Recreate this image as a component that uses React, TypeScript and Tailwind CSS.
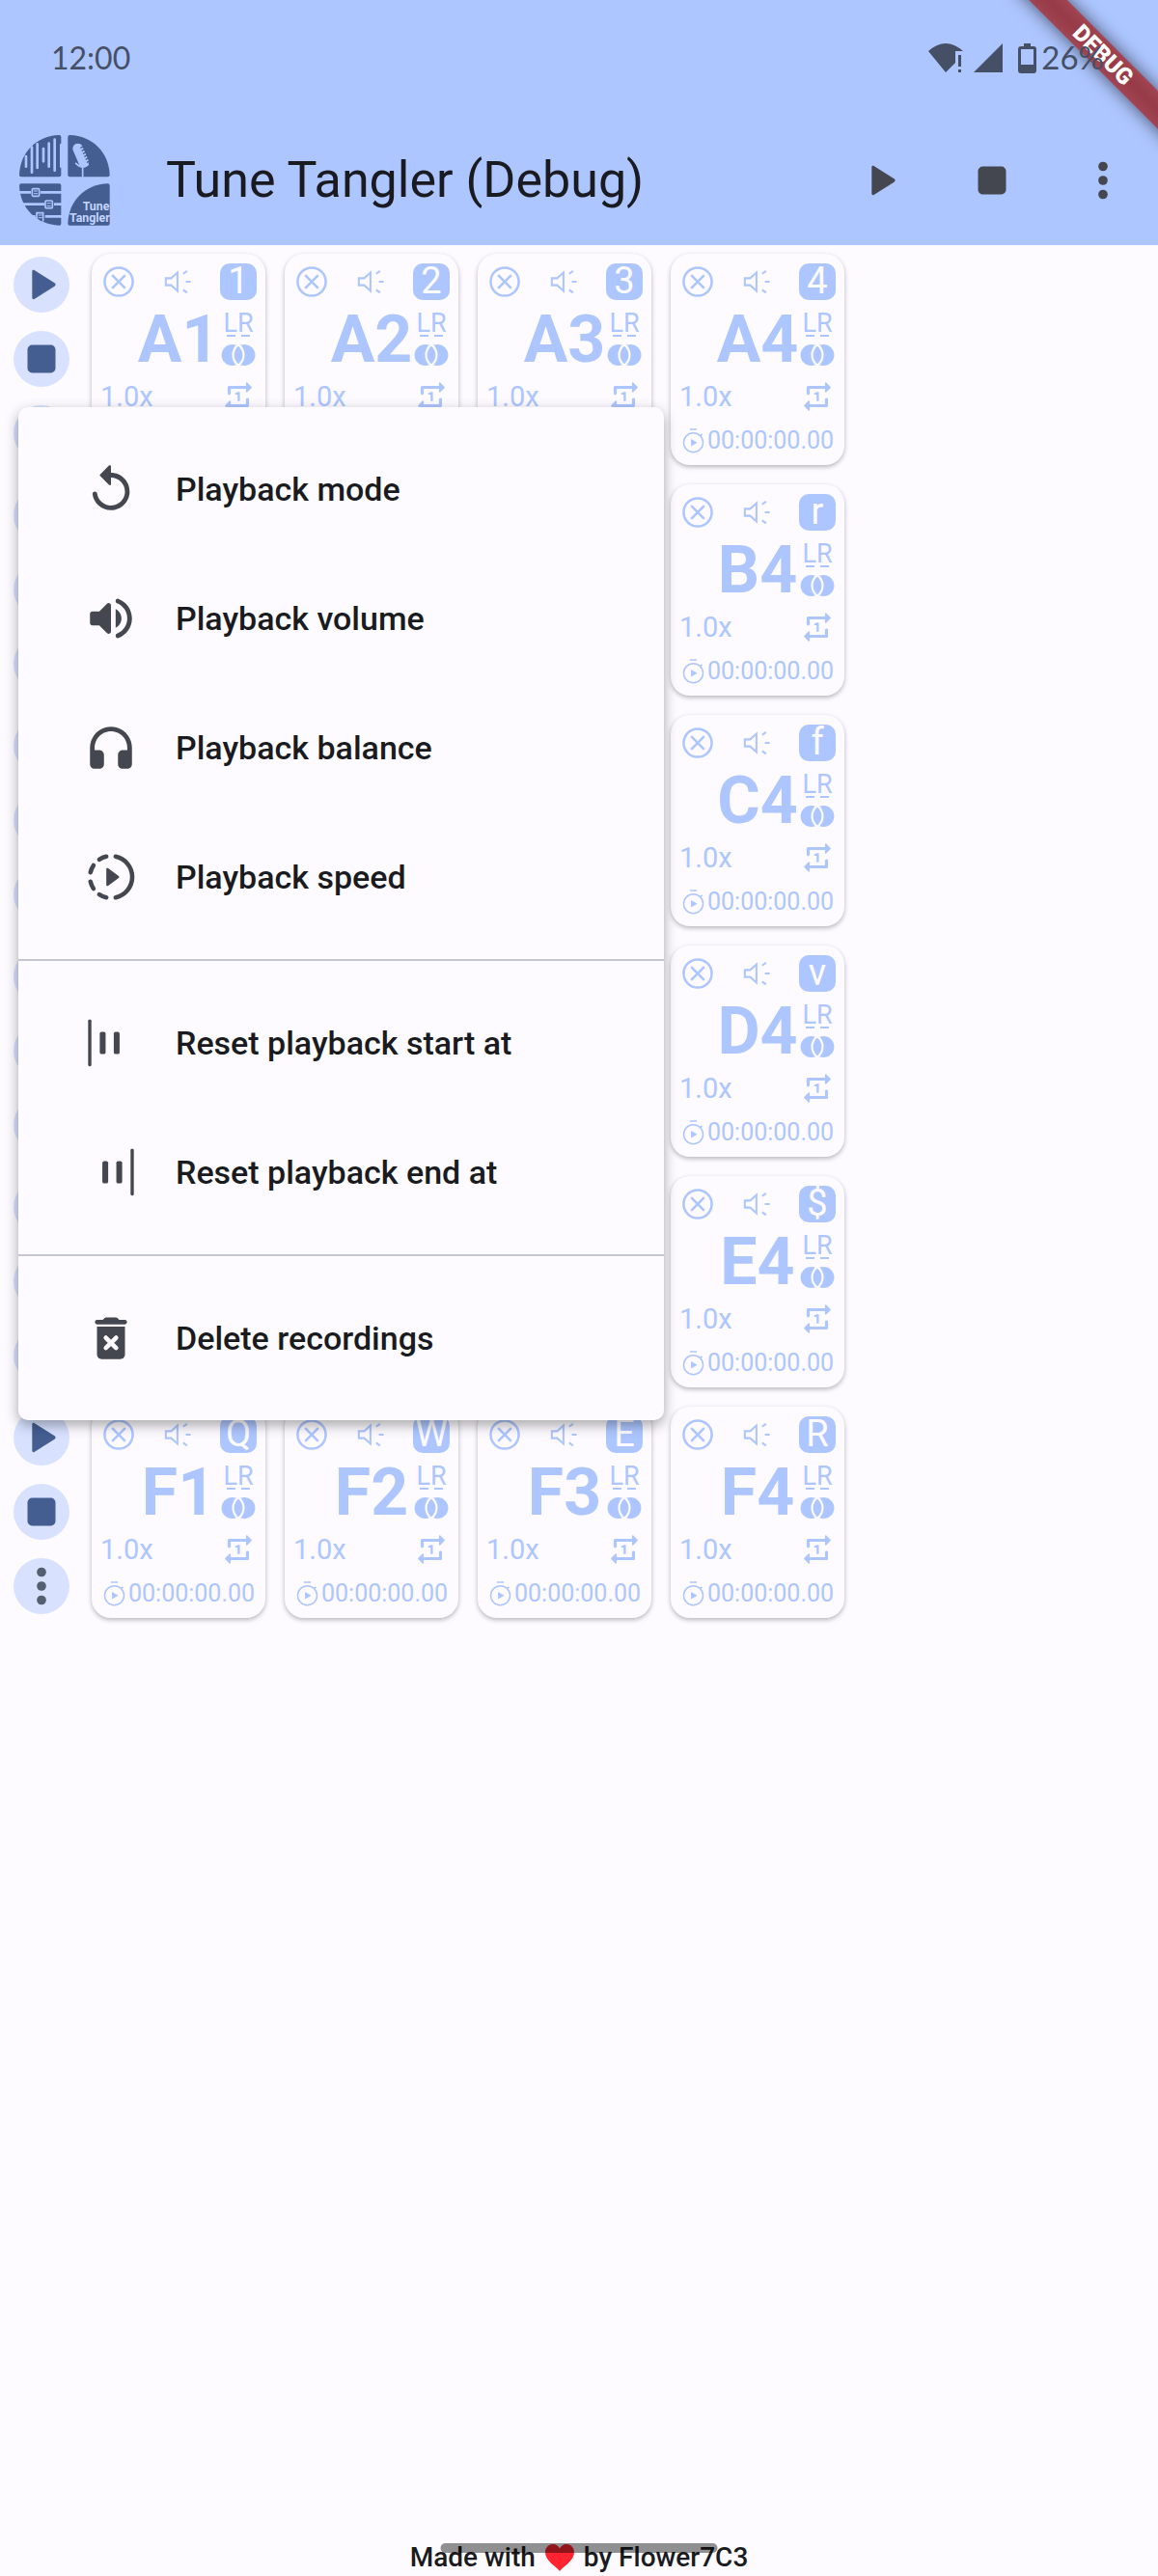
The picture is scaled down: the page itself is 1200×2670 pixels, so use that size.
import type { ReactNode } from "react";

const ROWS = [
  { name: "A", keys: ["1", "2", "3", "4"] },
  { name: "B", keys: ["q", "w", "e", "r"] },
  { name: "C", keys: ["a", "s", "d", "f"] },
  { name: "D", keys: ["z", "x", "c", "v"] },
  { name: "E", keys: ["!", "@", "#", "$"] },
  { name: "F", keys: ["Q", "W", "E", "R"] },
];

type IconProps = { className?: string };

function Svg({ className = "size-[58px]", children }: IconProps & { children: ReactNode }) {
  return (
    <svg viewBox="0 0 24 24" fill="currentColor" className={`${className} shrink-0`} aria-hidden="true">
      {children}
    </svg>
  );
}

const PlayIcon = () => (
  <Svg>
    <path d="M8 6.3v11.4c0 .5.5.7.9.5l8.7-5.5c.6-.4.6-1 0-1.4L8.9 5.8C8.5 5.6 8 5.8 8 6.3z" />
  </Svg>
);

const StopIcon = () => (
  <Svg>
    <rect x="6" y="6" width="12" height="12" rx="2" />
  </Svg>
);

const MoreIcon = () => (
  <Svg>
    <circle cx="12" cy="6" r="2" />
    <circle cx="12" cy="12" r="2" />
    <circle cx="12" cy="18" r="2" />
  </Svg>
);

const ReplayIcon = () => (
  <Svg>
    <path d="M12 5V2.21c0-.45-.54-.67-.85-.35l-3.8 3.79c-.2.2-.2.51 0 .71l3.79 3.79c.32.31.86.09.86-.36V7c3.73 0 6.68 3.42 5.86 7.29-.47 2.27-2.31 4.1-4.57 4.57-3.57.75-6.75-1.7-7.23-5.01-.07-.48-.49-.85-.98-.85-.6 0-1.08.53-1 1.13.62 4.39 4.8 7.64 9.53 6.72 3.12-.61 5.63-3.12 6.24-6.24C20.84 9.48 16.94 5 12 5z" />
  </Svg>
);

const VolumeUpIcon = () => (
  <Svg>
    <path d="M3 10v4c0 .55.45 1 1 1h3l3.29 3.29c.63.63 1.71.18 1.71-.71V6.41c0-.89-1.08-1.34-1.71-.71L7 9H4c-.55 0-1 .45-1 1zm13.5 2c0-1.77-1.02-3.29-2.5-4.03v8.05c1.48-.73 2.5-2.25 2.5-4.02zM14 4.45v.2c0 .38.25.71.6.85C17.18 6.53 19 9.06 19 12s-1.82 5.47-4.4 6.5c-.36.14-.6.47-.6.85v.2c0 .63.63 1.07 1.21.85C18.6 19.11 21 15.84 21 12s-2.4-7.11-5.79-8.4c-.58-.23-1.21.22-1.21.85z" />
  </Svg>
);

const HeadphonesIcon = () => (
  <Svg>
    <path d="M3 12v7c0 1.1.9 2 2 2h2c1.1 0 2-.9 2-2v-4c0-1.1-.9-2-2-2H5v-1c0-3.87 3.13-7 7-7s7 3.13 7 7v1h-2c-1.1 0-2 .9-2 2v4c0 1.1.9 2 2 2h2c1.1 0 2-.9 2-2v-7c0-4.97-4.03-9-9-9s-9 4.03-9 9z" />
  </Svg>
);

const SpeedIcon = () => (
  <Svg>
    <path
      d="M14 3.2a9 9 0 0 1 0 17.6M10 3.2a9 9 0 0 0-3 1.3M4.5 7A9 9 0 0 0 3.2 10M3.2 14a9 9 0 0 0 1.3 3M7 19.5a9 9 0 0 0 3 1.3"
      fill="none"
      stroke="currentColor"
      strokeWidth="1.9"
      strokeLinecap="round"
    />
    <path d="M10 8.6v6.8c0 .4.4.6.7.4l4.6-3.4c.3-.2.3-.6 0-.8l-4.6-3.4c-.3-.2-.7 0-.7.4z" />
  </Svg>
);

const StartAtIcon = () => (
  <Svg>
    <rect x="2.2" y="2" width="1.4" height="20" rx=".6" />
    <rect x="7.2" y="7.2" width="2.5" height="9.6" rx=".8" />
    <rect x="13.2" y="7.2" width="2.5" height="9.6" rx=".8" />
  </Svg>
);

const EndAtIcon = () => (
  <Svg>
    <rect x="8.3" y="7.2" width="2.5" height="9.6" rx=".8" />
    <rect x="14.3" y="7.2" width="2.5" height="9.6" rx=".8" />
    <rect x="20.4" y="2" width="1.4" height="20" rx=".6" />
  </Svg>
);

const DeleteIcon = () => (
  <Svg>
    <path d="M6.1 6.1h11.8a1 1 0 0 0 0-2H15.5l-.7-.7a1 1 0 0 0-.7-.3H9.9a1 1 0 0 0-.7.3l-.7.7H6.1a1 1 0 0 0 0 2z" />
    <path d="M6 7h12V19a2 2 0 0 1-2 2H8a2 2 0 0 1-2-2z" />
    <path d="M9.8 11.8l4.4 4.4M14.2 11.8l-4.4 4.4" stroke="#fdfbff" strokeWidth="1.9" strokeLinecap="round" />
  </Svg>
);

const ClearIcon = () => (
  <Svg className="size-[38px]">
    <path
      d="M12 2.8a9.2 9.2 0 1 0 0 18.4a9.2 9.2 0 1 0 0-18.4zM7.7 7.7l8.6 8.6M16.3 7.7l-8.6 8.6"
      fill="none"
      stroke="currentColor"
      strokeWidth="1.6"
    />
  </Svg>
);

const SpeakerIcon = () => (
  <Svg className="size-[38px]">
    <path
      d="M3.7 9.7h3.5l4.1-3.7v12l-4.1-3.7H3.7zM15 6.8l2.6-1.8M16.8 12H20M15 17.3l2.6 1.9"
      fill="none"
      stroke="currentColor"
      strokeWidth="1.3"
    />
  </Svg>
);

const JoinIcon = () => (
  <Svg className="size-[38px]">
    <circle cx="8" cy="12" r="7" />
    <circle cx="16" cy="12" r="7" />
    <path d="M12 5.2c-4.6 3.6-4.6 10 0 13.6c4.6-3.6 4.6-10 0-13.6z" stroke="#fdfbff" strokeWidth="1.4" />
  </Svg>
);

const RepeatOneIcon = () => (
  <Svg className="size-[38px]">
    <path d="M7 7h10v1.79c0 .45.54.67.85.35l2.79-2.79c.2-.2.2-.51 0-.71l-2.79-2.79c-.31-.31-.85-.09-.85.36V5H6c-.55 0-1 .45-1 1v4c0 .55.45 1 1 1s1-.45 1-1V7zm10 10H7v-1.79c0-.45-.54-.67-.85-.35l-2.79 2.79c-.2.2-.2.51 0 .71l2.79 2.79c.31.31.85.09.85-.36V19h11c.55 0 1-.45 1-1v-4c0-.55-.45-1-1-1s-1 .45-1 1v3z" />
    <path d="M13 9v6h-1.500v-4.300h-1.500v-.9l1.800-.8z" />
  </Svg>
);

const TimerIcon = () => (
  <Svg className="size-[29px]">
    <circle cx="12" cy="13" r="8.3" fill="none" stroke="currentColor" strokeWidth="1.2" />
    <path d="M9 1.7h6M18 7l1.5-1.3" stroke="currentColor" strokeWidth="1.3" />
    <path d="M10 10l5.4 3-5.4 3.2z" />
  </Svg>
);

function Logo() {
  return (
    <svg viewBox="0 0 282 282" className="size-[94px] shrink-0 text-[#445e91]" role="img" aria-label="Tune Tangler logo">
      <g fill="currentColor">
        <path d="M124 0q6 0 6 6v118q0 6-6 6H6q-6 0-6-6C2 54 54 2 124 0z" />
        <path d="M157 0q-6 0-6 6v118q0 6 6 6h118q6 0 6-6C279 54 227 2 157 0z" />
        <path d="M124 281q6 0 6-6V157q0-6-6-6H6q-6 0-6 6c2 70 54 122 124 124z" />
        <path d="M275 151q6 0 6 6v118q0 6-6 6H157q-6 0-6-6c2-70 54-122 124-124z" />
      </g>
      <g stroke="#adc6ff" strokeLinecap="round" fill="none">
        <path
          d="M21 66v32M39 38v78M56 28v74M75 42v40M92 26v72M110 14v96M130 30v68"
          strokeWidth="8"
        />
        <path d="M-4 178h40M66 178h68M-4 215h82M108 215h24M20 253h30M80 253h54" strokeWidth="8" strokeLinecap="butt" />
        <g strokeWidth="5">
          <rect x="40" y="167" width="22" height="23" rx="3" />
          <rect x="81" y="204" width="22" height="23" rx="3" />
          <path d="M54 262v-20h20v24" />
          <path d="M46 174h10M46 182h10M87 212h10M87 220h10M60 249h10M60 257h10" strokeWidth="3" />
        </g>
        <path d="M182 42l18 42" strokeWidth="32" />
        <path d="M176 88q20 20 38 4M197 102v28" strokeWidth="5" />
      </g>
      <path d="M190 40l14-7M194 49l14-7M198 58l14-7M202 67l14-7M206 76l14-7M210 85l12-6" stroke="#445e91" strokeWidth="4" />
      <g fill="#c4d5ff" textAnchor="end" className="font-[Roboto,sans-serif] text-[37px] font-bold">
        <text x="280" y="234">Tune</text>
        <text x="281" y="271">Tangler</text>
      </g>
    </svg>
  );
}

function StatusBar() {
  return (
    <div className="relative z-20 flex h-[120px] items-center justify-between pr-[56px] pl-[53px] font-[Lato,sans-serif] text-[#454f66]">
      <span className="text-[32px]">12:00</span>
      <div className="flex items-center">
        <svg viewBox="0 0 36 30" className="mr-[11px] h-[30px] w-9" fill="currentColor" aria-hidden="true">
          <path d="M0 8Q18-8 36 8h-8v12l-10 10z" />
          <path d="M31 12h3v12h-3zM31 27h3v3h-3z" />
        </svg>
        <svg viewBox="0 0 30 30" className="mr-4 size-[30px]" fill="currentColor" aria-hidden="true">
          <path d="M30 0v30H0z" />
        </svg>
        <svg viewBox="0 0 19 31" className="mr-[5px] h-[31px] w-[19px]" fill="currentColor" aria-hidden="true">
          <path fillRule="evenodd" d="M6 0h7v3h3q3 0 3 3v22q0 3-3 3H3q-3 0-3-3V6q0-3 3-3h3zM3 6v16h13V6z" />
        </svg>
        <span className="text-[33px]">26%</span>
      </div>
    </div>
  );
}

function DebugBanner() {
  return (
    <div className="pointer-events-none absolute top-0 right-0 z-10 size-48 overflow-hidden">
      <div className="absolute top-[43px] -right-[63px] flex h-7 w-60 rotate-45 items-center justify-center bg-linear-to-b from-[#a24453] via-[#963a47] to-[#a24453] text-[24px] font-black text-white shadow-[0_0_18px_rgba(0,0,0,0.6)]">
        DEBUG
      </div>
    </div>
  );
}

function RoundButton({ label, children }: { label: string; children: ReactNode }) {
  return (
    <button aria-label={label} className="size-[58px] rounded-full bg-[#d8e2ff] text-[#445e91]">
      {children}
    </button>
  );
}

function Pad({ name, shortcut }: { name: string; shortcut: string }) {
  return (
    <article className="flex w-[180px] flex-col rounded-[20px] bg-[#fdfbff] px-[9px] py-[10px] text-[#adc6ff] shadow-[0_2px_5px_rgba(0,0,0,0.28)]">
      <div className="flex items-center justify-between">
        <button aria-label={`Clear ${name}`}>
          <ClearIcon />
        </button>
        <button aria-label={`Volume of ${name}`}>
          <SpeakerIcon />
        </button>
        <kbd className="h-[38px] w-[38px] rounded-[10px] bg-[#adc6ff] text-center font-[Roboto,sans-serif] text-[38px] leading-[36px] text-[#fdfbff]">
          {shortcut}
        </kbd>
      </div>
      <div className="mt-[2px] flex h-[78px]">
        <h2 className="ml-[38px] flex flex-1 justify-center text-[68px] leading-[78px] font-bold">{name}</h2>
        <div className="flex w-[38px] flex-col items-center justify-end pb-1">
          <span className="text-[27px] leading-[23px]">LR</span>
          <span className="flex gap-[6px]">
            <i className="h-[2px] w-[9px] bg-current" />
            <i className="h-[2px] w-[9px] bg-current" />
          </span>
          <JoinIcon />
        </div>
      </div>
      <div className="mt-px flex items-center justify-between">
        <span className="text-[29px] leading-[38px]">1.0x</span>
        <button aria-label={`Playback mode of ${name}`}>
          <RepeatOneIcon />
        </button>
      </div>
      <div className="mt-3 flex h-[30px] items-center">
        <TimerIcon />
        <time className="text-[25px]">00:00:00.00</time>
      </div>
    </article>
  );
}

function MenuItem({ icon, label }: { icon: ReactNode; label: string }) {
  return (
    <button role="menuitem" className="flex h-[134px] w-full items-center gap-[38px] pl-[67px] text-left text-[34px] font-medium text-[#1a1b20]">
      <span className="text-[#44474f]">{icon}</span>
      {label}
    </button>
  );
}

function MenuDivider() {
  return <hr className="my-[18px] border-t-2 border-[#c4c6d0]" />;
}

function RowMenu() {
  return (
    <div
      role="menu"
      className="absolute top-[168px] left-[19px] z-10 w-[669px] max-w-full rounded-[10px] bg-[#fdfbff] py-[18px] shadow-[0_5px_14px_rgba(0,0,0,0.35)]"
    >
      <MenuItem icon={<ReplayIcon />} label="Playback mode" />
      <MenuItem icon={<VolumeUpIcon />} label="Playback volume" />
      <MenuItem icon={<HeadphonesIcon />} label="Playback balance" />
      <MenuItem icon={<SpeedIcon />} label="Playback speed" />
      <MenuDivider />
      <MenuItem icon={<StartAtIcon />} label="Reset playback start at" />
      <MenuItem icon={<EndAtIcon />} label="Reset playback end at" />
      <MenuDivider />
      <MenuItem icon={<DeleteIcon />} label="Delete recordings" />
    </div>
  );
}

export default function App() {
  return (
    <div className="relative flex min-h-screen flex-col bg-[#fdfbff] font-[Roboto,sans-serif]">
      <header className="bg-[#adc6ff]">
        <StatusBar />
        <DebugBanner />
        <div className="flex h-[134px] items-center pl-5 text-[#44474f]">
          <Logo />
          <h1 className="ml-[58px] flex-1 text-[52px] text-[#1a1b20]">Tune Tangler (Debug)</h1>
          <button aria-label="Play all" className="flex w-[115px] justify-center">
            <PlayIcon />
          </button>
          <button aria-label="Stop all" className="flex w-[115px] justify-center">
            <StopIcon />
          </button>
          <button aria-label="More" className="flex w-[115px] justify-center">
            <MoreIcon />
          </button>
        </div>
      </header>

      <main className="relative flex flex-col gap-5 pt-[9px] pl-[14px]">
        {ROWS.map((row) => (
          <section key={row.name} className="flex">
            <div className="mr-[23px] flex flex-col gap-[19px] pt-[3px]">
              <RoundButton label={`Play row ${row.name}`}>
                <PlayIcon />
              </RoundButton>
              <RoundButton label={`Stop row ${row.name}`}>
                <StopIcon />
              </RoundButton>
              <RoundButton label={`Row ${row.name} menu`}>
                <span className="text-[#565e71]">
                  <MoreIcon />
                </span>
              </RoundButton>
            </div>
            <div className="flex gap-5">
              {row.keys.map((key, i) => (
                <Pad key={key} name={`${row.name}${i + 1}`} shortcut={key} />
              ))}
            </div>
          </section>
        ))}
        <RowMenu />
      </main>

      <footer className="relative mt-auto flex justify-center pb-[3px] text-[28px] leading-8 font-medium text-[#1a1b20]">
        <p className="flex items-center gap-[10px]">
          Made with
          <svg viewBox="0 0 30 28" className="h-7 w-[30px]" role="img" aria-label="love">
            <path d="M15 28C10 22 0 17 0 8.5C0 3 4 0 8 0c3 0 5.5 1.5 7 4.5C16.5 1.5 19 0 22 0c4 0 8 3 8 8.5C30 17 20 22 15 28z" fill="#ff2430" />
          </svg>
          by Flower7C3
        </p>
        <div className="absolute bottom-6 left-1/2 h-[10px] w-[287px] -translate-x-1/2 rounded-full bg-black/43" />
      </footer>
    </div>
  );
}
